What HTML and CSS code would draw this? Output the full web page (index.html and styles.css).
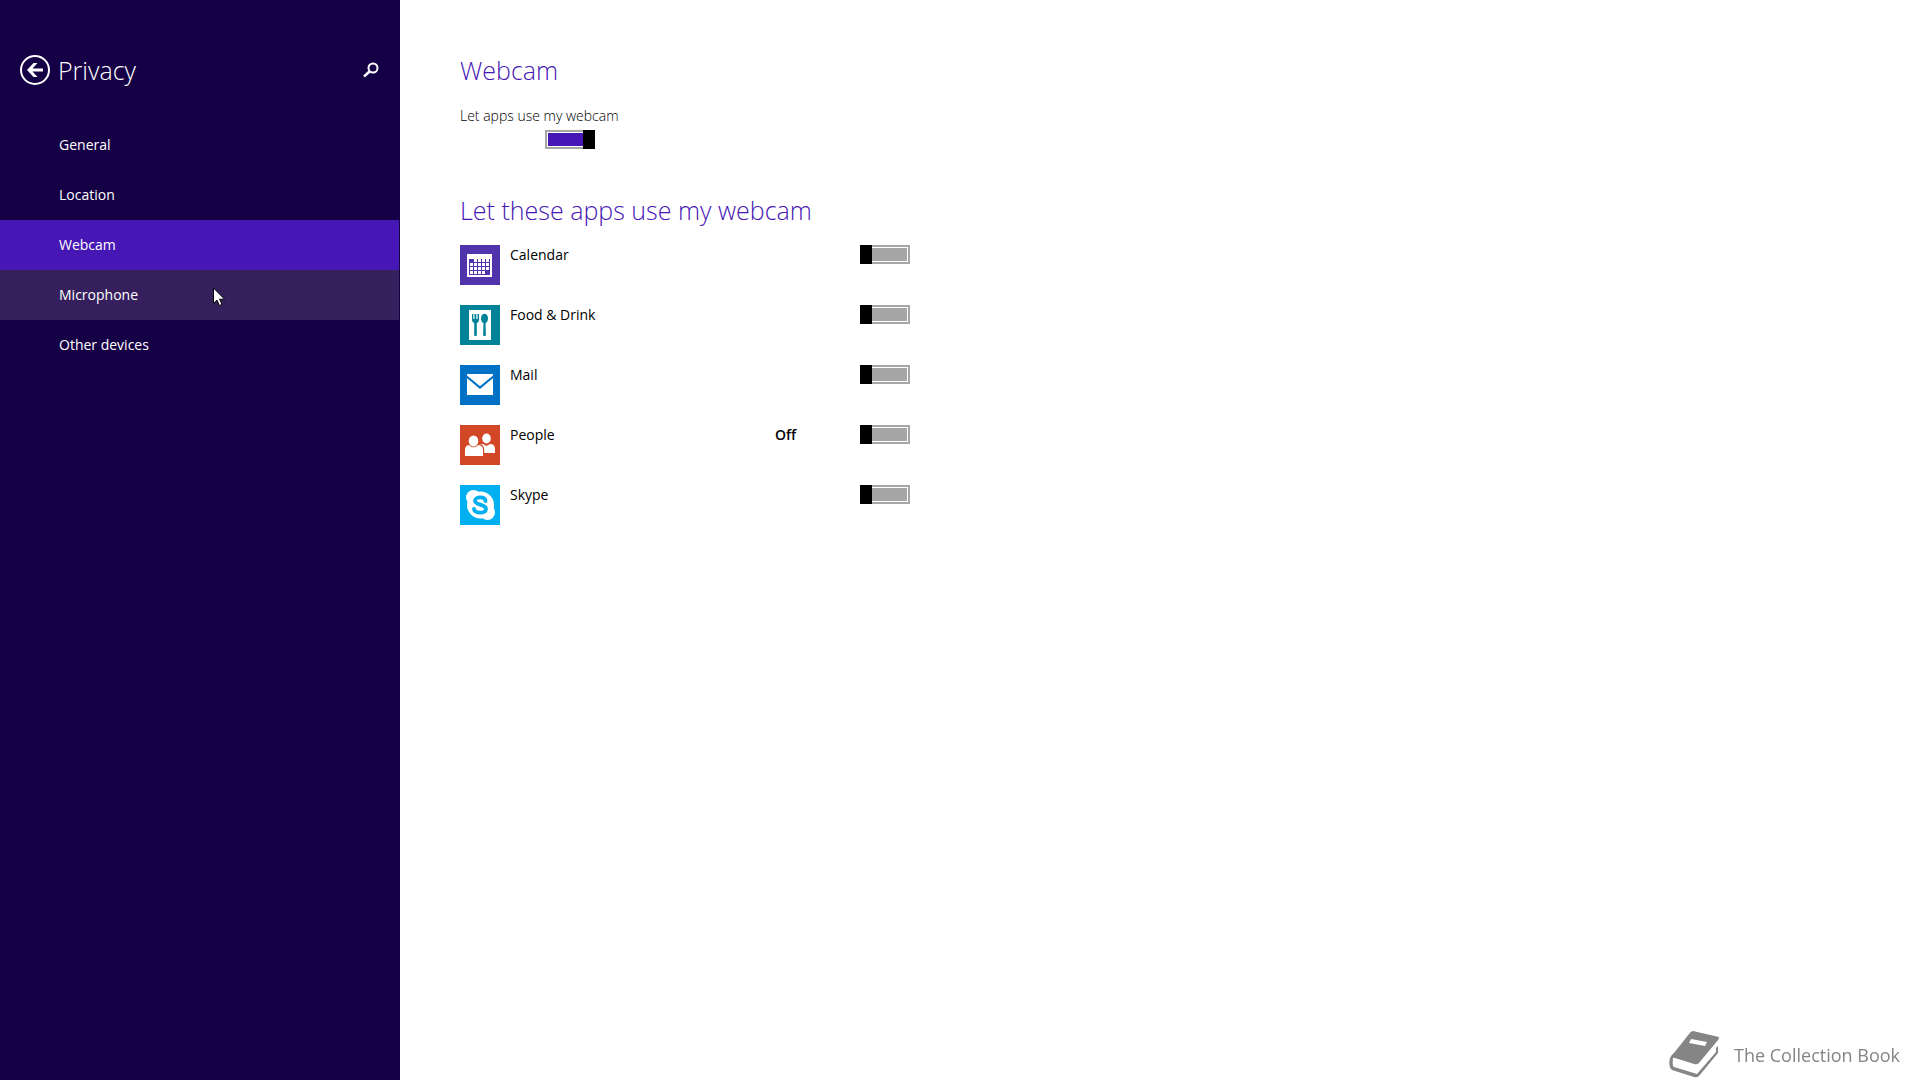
FILE: index.html
```html
<!DOCTYPE html>
<html lang="en">
<head>
    <meta charset="UTF-8">
    <meta name="viewport" content="width=device-width, initial-scale=1.0">
    <title>Privacy - Webcam</title>
    <link rel="stylesheet" href="styles.css">
</head>
<body>
    <aside class="sidebar">
        <header class="sidebar-header">
            <button class="icon-button" type="button" aria-label="Back">
                <svg width="30" height="30" viewBox="0 0 30 30">
                    <circle cx="15" cy="15" r="14" fill="none" stroke="#fff" stroke-width="2"/>
                    <path d="M7 15l6.500-7h4l-5 5.500H23v3H12.500l5 5.500h-4z" fill="#fff"/>
                </svg>
            </button>
            <h1>Privacy</h1>
            <button class="icon-button" type="button" aria-label="Search">
                <svg width="16" height="16" viewBox="0 0 16 16" fill="none" stroke="#fff">
                    <circle cx="10" cy="6" r="4.500" stroke-width="2"/>
                    <path d="M6.500 9.500L1 14.500" stroke-width="2.500"/>
                </svg>
            </button>
        </header>
        <nav class="menu">
            <a href="#general">General</a>
            <a href="#location">Location</a>
            <a class="active" href="#webcam">Webcam</a>
            <a class="hover" href="#microphone">Microphone
                <svg class="cursor" width="13" height="19" viewBox="0 0 13 19">
                    <path d="M.5 1v15.500l3.500-3.300 2.400 5.300 2.600-1.100-2.400-5.200h5z" fill="#fff" stroke="#000"/>
                </svg>
            </a>
            <a href="#devices">Other devices</a>
        </nav>
    </aside>

    <main class="content">
        <section>
            <h2>Webcam</h2>
            <div class="main-switch">
                <label for="webcam">Let apps use my webcam</label>
                <input class="switch" type="checkbox" id="webcam" checked>
            </div>
        </section>

        <section>
            <h2>Let these apps use my webcam</h2>
            <ul class="apps">
                <li>
                    <svg class="app-icon calendar" viewBox="0 0 40 40">
                        <path d="M7 9h25v23H7z" fill="#fff"/>
                        <path d="M9 14h21v16H9z" fill="#5133ab"/>
                        <path d="M14 14h3v3h-3zM18 14h3v3h-3zM22 14h3v3h-3zM26 14h3v3h-3zM10 18h3v3h-3zM14 18h3v3h-3zM18 18h3v3h-3zM22 18h3v3h-3zM26 18h3v3h-3zM10 22h3v3h-3zM14 22h3v3h-3zM18 22h3v3h-3zM22 22h3v3h-3zM26 22h3v3h-3zM10 26h3v3h-3zM14 26h3v3h-3zM18 26h3v3h-3zM22 26h3v3h-3z" fill="#fff"/>
                    </svg>
                    <label for="calendar">Calendar</label>
                    <span class="state"></span>
                    <input class="switch" type="checkbox" id="calendar">
                </li>
                <li>
                    <svg class="app-icon food" viewBox="0 0 40 40">
                        <path d="M9 5h22v30H9z" fill="#fff"/>
                        <path d="M12 9h1.300v5h1.200V9h1.800v5h1.200V9H19v6q0 2.500-2.200 3v12.500q-1.300 1.200-2.600 0V18Q12 17.500 12 15z" fill="#008299"/>
                        <ellipse cx="24.500" cy="13.500" rx="3.500" ry="4.800" fill="#008299"/>
                        <path d="M23.500 17h2l.4 13.500q-1.400 1.200-2.800 0z" fill="#008299"/>
                    </svg>
                    <label for="food">Food &amp; Drink</label>
                    <span class="state"></span>
                    <input class="switch" type="checkbox" id="food">
                </li>
                <li>
                    <svg class="app-icon mail" viewBox="0 0 40 40">
                        <path d="M7 9h26v21H7z" fill="#fff"/>
                        <path d="M6 11l14 11.500L34 11" fill="none" stroke="#0072c6" stroke-width="2.200"/>
                    </svg>
                    <label for="mail">Mail</label>
                    <span class="state"></span>
                    <input class="switch" type="checkbox" id="mail">
                </li>
                <li>
                    <svg class="app-icon people" viewBox="0 0 40 40">
                        <ellipse cx="26.500" cy="13.500" rx="4.300" ry="5" fill="#fff"/>
                        <path d="M18 28v-4q0-5 5-5l3.500 2 3.500-2q5 0 5 5v4z" fill="#fff"/>
                        <path d="M5 31v-6q0-5 5-5l3.800 2.200L17.500 20q5.500 0 5.500 5v6z" fill="#fff" stroke="#d24726" stroke-width="2.400" paint-order="stroke"/>
                        <ellipse cx="13.500" cy="16" rx="4.800" ry="5.500" fill="#fff" stroke="#d24726" stroke-width="1.600" paint-order="stroke"/>
                    </svg>
                    <label for="people">People</label>
                    <span class="state">Off</span>
                    <input class="switch" type="checkbox" id="people">
                </li>
                <li>
                    <svg class="app-icon skype" viewBox="0 0 40 40">
                        <circle cx="20.500" cy="20" r="13.500" fill="#fff"/>
                        <circle cx="13.500" cy="12.500" r="7.500" fill="#fff"/>
                        <circle cx="27.500" cy="27.500" r="7.500" fill="#fff"/>
                        <path d="M25.500 16c-.5-5-10.500-4.500-10.500-.3 0 4.800 11 3 11 8.300 0 5-11.500 4.800-12 0" fill="none" stroke="#00aff0" stroke-width="3.800" stroke-linecap="round"/>
                    </svg>
                    <label for="skype">Skype</label>
                    <span class="state"></span>
                    <input class="switch" type="checkbox" id="skype">
                </li>
            </ul>
        </section>
    </main>

    <div class="watermark">
        <svg width="50" height="47" viewBox="0 0 50 47">
            <path d="M24 0L50 6Q50 8 49 9L30 32Q28 34 25 33L6 27Q3 26 4 29Q3 35 5 36L28 43L47 21V17L49 15V22L30 45Q28 47 25 46L3 39Q-1 36 1 27Q2 24 5 22L20 3Q22 0 24 0Z" fill="#858585"/>
            <path d="M22 8l16 3-2 4-16-3z" fill="#fff"/>
        </svg>
        <span>The Collection Book</span>
    </div>
</body>
</html>
```
FILE: styles.css
```css
* {
    margin: 0;
    padding: 0;
    box-sizing: border-box;
}

body {
    display: flex;
    min-height: 100vh;
    font-family: 'Segoe UI', 'Open Sans', sans-serif;
    font-size: 14px;
    line-height: 20px;
    color: #000;
    background: #fff;
}

h1,
h2 {
    font-size: 25px;
    font-weight: 300;
    line-height: 40px;
}

.sidebar {
    flex: 0 0 400px;
    background: #160045;
    border-right: 1px solid #160045;
    color: #fff;
}

.sidebar-header {
    display: flex;
    align-items: center;
    gap: 8px;
    height: 100px;
    padding: 40px 20px 0;
    margin-bottom: 20px;
}

.sidebar-header h1 {
    flex: 1;
}

.icon-button {
    display: flex;
    border: none;
    background: none;
    cursor: pointer;
}

.menu a {
    display: block;
    position: relative;
    padding: 15px 59px;
    color: #fff;
    text-decoration: none;
}

.menu .active {
    background: #4617b4;
}

.menu .hover {
    background: #351f5c;
}

/* pointer resting on the hovered item */
.cursor {
    position: absolute;
    left: 213px;
    top: 17px;
}

.content {
    flex: 1;
    padding: 50px 60px;
}

.content h2 {
    color: #4617b4;
}

.main-switch {
    display: flex;
    flex-direction: column;
    align-items: flex-start;
    gap: 4px;
    margin: 16px 0 41px;
}

.main-switch label {
    font-weight: 300;
}

.main-switch .switch {
    margin-left: 85px;
}

.apps {
    list-style: none;
    margin-top: 15px;
}

.apps li {
    display: flex;
    align-items: flex-start;
    max-width: 450px;
    margin-bottom: 20px;
}

.app-icon {
    width: 40px;
    height: 40px;
    margin-right: 10px;
}

.calendar {
    background: #5133ab;
}

.food {
    background: #008299;
}

.mail {
    background: #0072c6;
}

.people {
    background: #d24726;
}

.skype {
    background: #00aff0;
}

.apps label {
    flex: 1;
}

.state {
    width: 85px;
    font-weight: 600;
}

.switch {
    appearance: none;
    position: relative;
    width: 50px;
    height: 19px;
    padding: 1px;
    border: 2px solid #a6a6a6;
    background: #a6a6a6 content-box;
    cursor: pointer;
}

.switch::before {
    content: '';
    position: absolute;
    top: -2px;
    left: -2px;
    width: 12px;
    height: 19px;
    background: #000;
}

.switch:checked {
    background-color: #4617b4;
}

.switch:checked::before {
    left: auto;
    right: -2px;
}

.watermark {
    position: fixed;
    right: 20px;
    bottom: 2px;
    display: flex;
    align-items: center;
    gap: 15px;
    font-size: 18px;
    color: #858585;
}
```
